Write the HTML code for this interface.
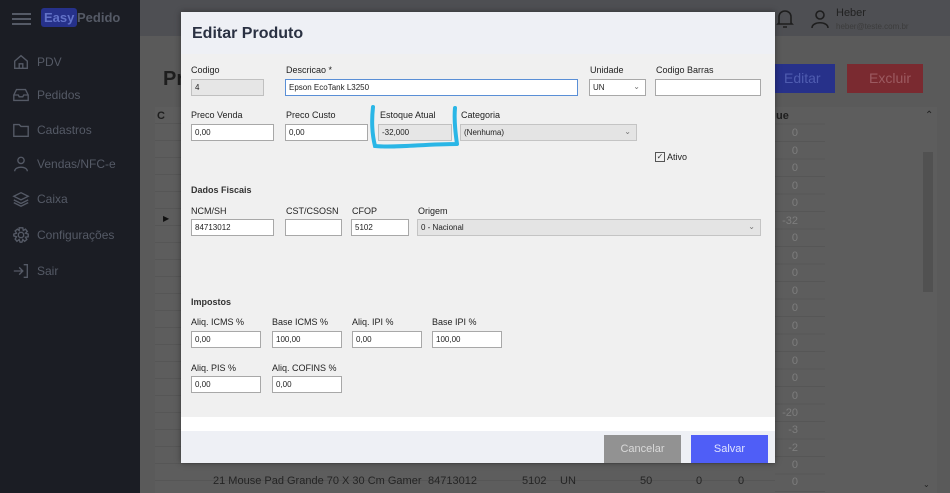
<!DOCTYPE html>
<html><head><meta charset="utf-8"><style>
*{box-sizing:border-box;margin:0;padding:0}
body{width:950px;height:493px;overflow:hidden;position:relative;background:#5a5a5a;font-family:"Liberation Sans",sans-serif}
.a{position:absolute}
.side{left:0;top:0;width:140px;height:493px;background:#1b1d24}
.nav{left:12px;color:#555a66;font-size:12px;display:flex;align-items:center;gap:7px}
.nav svg{width:18px;height:18px;stroke:#555a66;fill:none;stroke-width:1.5}
.top{left:140px;top:0;width:810px;height:36px;background:#4e4f53}
.lbl{font-size:9px;color:#222}
.in{background:#fff;border:1px solid #a8a8a8;height:17px;font-size:8px;padding:3px 3px;color:#222}
.ro{background:#e6e6e6;border:1px solid #c0c0c0}
.sel{background:#e4e4e4;border:1px solid #c4c4c4}
.chev{position:absolute;right:5px;top:2px;font-size:8px;color:#777}
.b{font-weight:bold;color:#333}
.num{color:#7d7d7d;font-size:11px;text-align:right;width:30px;left:768px}
</style></head><body>
<div class="a side"></div>
<div class="a" style="left:12px;top:13px;width:19px;height:2px;background:#555a66;box-shadow:0 5px 0 #555a66,0 10px 0 #555a66"></div>
<div class="a" style="left:41px;top:8px;background:#26318a;color:#6272c8;font-size:13px;font-weight:bold;padding:2px 3px;border-radius:3px">Easy</div>
<div class="a" style="left:77px;top:10px;color:#555a66;font-size:13px;font-weight:bold">Pedido</div>
<div class="a nav" style="top:53px"><svg viewBox="0 0 20 20"><path d="M3 9 L10 3 L17 9 V17 H3Z M8 17 V12 H12 V17"/></svg>PDV</div>
<div class="a nav" style="top:86px"><svg viewBox="0 0 20 20"><path d="M2 10 L5 4 H15 L18 10 V16 H2Z M2 10 H7 L8 12 H12 L13 10 H18"/></svg>Pedidos</div>
<div class="a nav" style="top:121px"><svg viewBox="0 0 20 20"><path d="M2 4 H8 L10 6 H18 V17 H2Z"/></svg>Cadastros</div>
<div class="a nav" style="top:155px"><svg viewBox="0 0 20 20"><circle cx="10" cy="6" r="3.5"/><path d="M3 18 C3 12 17 12 17 18"/></svg>Vendas/NFC-e</div>
<div class="a nav" style="top:190px"><svg viewBox="0 0 20 20"><path d="M10 3 L18 7 L10 11 L2 7Z M2 11 L10 15 L18 11 M2 14 L10 18 L18 14"/></svg>Caixa</div>
<div class="a nav" style="top:226px"><svg viewBox="0 0 20 20"><circle cx="10" cy="10" r="3"/><path d="M8 2 H12 L12.5 5 L15 3.5 L17 6 L15 8 L18 9 V12 L15 12.5 L16.5 15 L14 17 L12 15 L11 18 H9 L8 15 L5.5 17 L3.5 14.5 L5 12 L2 11 V9 L5 8 L3.5 5.5 L6 3.5 L8 5Z"/></svg>Configurações</div>
<div class="a nav" style="top:262px"><svg viewBox="0 0 20 20"><path d="M2 10 H12 M8 6 L12 10 L8 14 M13 3 H17 V17 H13"/></svg>Sair</div>
<div class="a top"></div>
<svg class="a" style="left:776px;top:8px" width="18" height="22" viewBox="0 0 18 22" fill="none" stroke="#1e1e1e" stroke-width="1.6"><path d="M3 15 V9 C3 5 6 3 9 3 C12 3 15 5 15 9 V15 L16 16 H2Z M7 19 H11"/></svg>
<svg class="a" style="left:810px;top:8px" width="20" height="22" viewBox="0 0 20 22" fill="none" stroke="#1e1e1e" stroke-width="1.6"><circle cx="10" cy="7" r="4"/><path d="M2 20 C2 13 18 13 18 20"/></svg>
<div class="a" style="left:836px;top:7px;font-size:11px;color:#222">Heber</div>
<div class="a" style="left:836px;top:22px;font-size:8px;color:#3c3c3c">heber@teste.com.br</div>
<div class="a" style="left:163px;top:68px;font-size:20px;font-weight:bold;color:#1e1e1e">Pr</div>
<div class="a" style="left:770px;top:64px;width:65px;height:29px;background:#27318a;color:#4f5cb0;font-size:14px;padding:6px 0 0 14px">Editar</div>
<div class="a" style="left:847px;top:64px;width:76px;height:29px;background:#7a2a30;color:#9c5a60;font-size:14px;padding:6px 0 0 22px">Excluir</div>
<div class="a" style="left:155px;top:107px;width:782px;height:386px;background:#5d5d5d"></div>
<div class="a" style="left:155px;top:107px;width:620px;height:386px;background:repeating-linear-gradient(#5d5d5d 0 16px,#565656 16px 17px)"></div>
<div class="a" style="left:775px;top:107px;width:50px;height:386px;background:repeating-linear-gradient(#5d5d5d 0 16.5px,#565656 16.5px 17.5px)"></div>
<div class="a" style="left:776px;top:110px;font-size:11px;font-weight:bold;color:#1e1e1e">ue</div>
<div class="a" style="left:157px;top:110px;font-size:11px;font-weight:bold;color:#1e1e1e">C</div>
<div class="a" style="left:163px;top:214px;font-size:8px;color:#111">▶</div>
<div class="a" style="left:925px;top:110px;font-size:10px;color:#222">⌃</div>
<div class="a" style="left:923px;top:152px;width:10px;height:140px;background:#515151"></div>
<div class="a" style="left:923px;top:480px;font-size:8px;color:#222">⌄</div>
<div class="a num" style="top:127px">0</div><div class="a num" style="top:145px">0</div><div class="a num" style="top:162px">0</div><div class="a num" style="top:180px">0</div><div class="a num" style="top:197px">0</div><div class="a num" style="top:215px">-32</div><div class="a num" style="top:232px">0</div><div class="a num" style="top:250px">0</div><div class="a num" style="top:267px">0</div><div class="a num" style="top:285px">0</div><div class="a num" style="top:302px">0</div><div class="a num" style="top:320px">0</div><div class="a num" style="top:337px">0</div><div class="a num" style="top:355px">0</div><div class="a num" style="top:372px">0</div><div class="a num" style="top:390px">0</div><div class="a num" style="top:407px">-20</div><div class="a num" style="top:424px">-3</div><div class="a num" style="top:442px">-2</div><div class="a num" style="top:459px">0</div><div class="a num" style="top:476px">0</div>
<div class="a" style="left:213px;top:475px;font-size:11px;color:#242424;white-space:nowrap">21 Mouse Pad Grande 70 X 30 Cm Gamer</div>
<div class="a" style="left:428px;top:475px;font-size:11px;color:#242424">84713012</div>
<div class="a" style="left:522px;top:475px;font-size:11px;color:#242424">5102</div>
<div class="a" style="left:560px;top:475px;font-size:11px;color:#242424">UN</div>
<div class="a" style="left:640px;top:475px;font-size:11px;color:#242424">50</div>
<div class="a" style="left:696px;top:475px;font-size:11px;color:#242424">0</div>
<div class="a" style="left:738px;top:475px;font-size:11px;color:#242424">0</div>

<div class="a" style="left:181px;top:12px;width:594px;height:451px;background:#f0f0f0;box-shadow:0 0 6px rgba(0,0,0,.4)"></div>
<div class="a" style="left:181px;top:12px;width:594px;height:42px;background:#eef0f5"></div>
<div class="a" style="left:192px;top:25px;font-size:16px;font-weight:bold;color:#2a3142">Editar Produto</div>
<div class="a" style="left:181px;top:417px;width:594px;height:14px;background:#fff"></div>
<div class="a" style="left:181px;top:431px;width:594px;height:32px;background:#eef0f5"></div>
<div class="a" style="left:604px;top:435px;width:77px;height:28px;background:#929292;color:#d9d9d9;font-size:11px;text-align:center;line-height:28px">Cancelar</div>
<div class="a" style="left:691px;top:435px;width:77px;height:28px;background:#4f5ef7;color:#dfe3ff;font-size:11px;text-align:center;line-height:28px">Salvar</div>

<div class="a lbl" style="left:191px;top:65px">Codigo</div>
<div class="a in ro" style="left:191px;top:79px;width:73px">4</div>
<div class="a lbl" style="left:286px;top:65px">Descricao *</div>
<div class="a in" style="left:285px;top:79px;width:293px;border-color:#5a8fd6">Epson EcoTank L3250</div>
<div class="a lbl" style="left:590px;top:65px">Unidade</div>
<div class="a in" style="left:589px;top:79px;width:57px">UN<span class="chev">⌄</span></div>
<div class="a lbl" style="left:656px;top:65px">Codigo Barras</div>
<div class="a in" style="left:655px;top:79px;width:106px"></div>

<div class="a lbl" style="left:191px;top:110px">Preco Venda</div>
<div class="a in" style="left:191px;top:124px;width:83px">0,00</div>
<div class="a lbl" style="left:286px;top:110px">Preco Custo</div>
<div class="a in" style="left:285px;top:124px;width:83px">0,00</div>
<div class="a lbl" style="left:380px;top:110px">Estoque Atual</div>
<div class="a in ro" style="left:378px;top:124px;width:74px">-32,000</div>
<div class="a lbl" style="left:461px;top:110px">Categoria</div>
<div class="a in sel" style="left:460px;top:124px;width:177px">(Nenhuma)<span class="chev">⌄</span></div>
<svg class="a" style="left:365px;top:100px" width="100" height="60" viewBox="0 0 100 60" fill="none" stroke="#2ab6e6" stroke-width="4" stroke-linecap="round"><path d="M8 7 C6 25 8 38 10 46 C30 48 60 44 92 44 M92 44 C90 30 89 18 90 8"/></svg>
<div class="a" style="left:655px;top:152px;width:10px;height:10px;border:1px solid #555;font-size:8px;line-height:8px;text-align:center;color:#333">✓</div>
<div class="a lbl" style="left:667px;top:152px">Ativo</div>

<div class="a lbl b" style="left:191px;top:185px">Dados Fiscais</div>
<div class="a lbl" style="left:191px;top:206px">NCM/SH</div>
<div class="a in" style="left:191px;top:219px;width:83px">84713012</div>
<div class="a lbl" style="left:286px;top:206px">CST/CSOSN</div>
<div class="a in" style="left:285px;top:219px;width:57px"></div>
<div class="a lbl" style="left:352px;top:206px">CFOP</div>
<div class="a in" style="left:351px;top:219px;width:58px">5102</div>
<div class="a lbl" style="left:418px;top:206px">Origem</div>
<div class="a in sel" style="left:417px;top:219px;width:344px">0 - Nacional<span class="chev">⌄</span></div>

<div class="a lbl b" style="left:191px;top:297px">Impostos</div>
<div class="a lbl" style="left:191px;top:317px">Aliq. ICMS %</div>
<div class="a in" style="left:191px;top:331px;width:70px">0,00</div>
<div class="a lbl" style="left:272px;top:317px">Base ICMS %</div>
<div class="a in" style="left:272px;top:331px;width:70px">100,00</div>
<div class="a lbl" style="left:352px;top:317px">Aliq. IPI %</div>
<div class="a in" style="left:352px;top:331px;width:70px">0,00</div>
<div class="a lbl" style="left:432px;top:317px">Base IPI %</div>
<div class="a in" style="left:432px;top:331px;width:70px">100,00</div>
<div class="a lbl" style="left:191px;top:363px">Aliq. PIS %</div>
<div class="a in" style="left:191px;top:376px;width:70px">0,00</div>
<div class="a lbl" style="left:272px;top:363px">Aliq. COFINS %</div>
<div class="a in" style="left:272px;top:376px;width:70px">0,00</div>
</body></html>
